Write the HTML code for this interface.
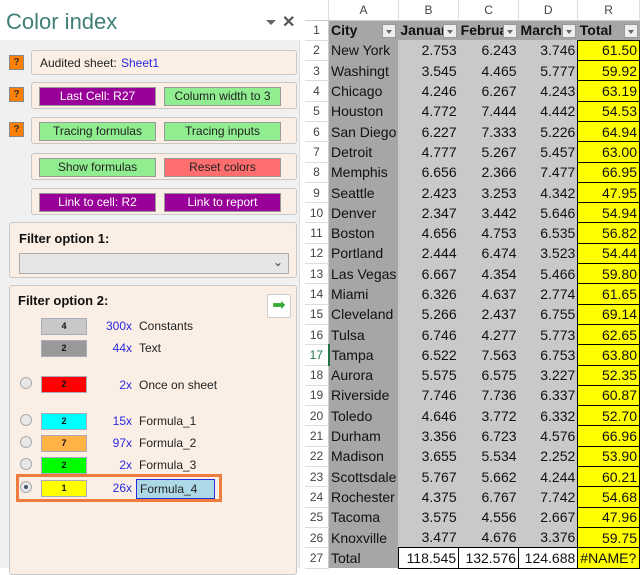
<!DOCTYPE html>
<html><head><style>
*{margin:0;padding:0;box-sizing:border-box}
body{width:640px;height:568px;overflow:hidden;background:#fff;font-family:"Liberation Sans",sans-serif;position:relative}
#left{position:absolute;left:0;top:0;width:300px;height:568px;background:#f0f0f0;border-right:1px solid #ddd}
#title{position:absolute;left:0;top:0;width:300px;height:40px;background:#fff}
#title span{position:absolute;left:6px;top:9px;font-size:22px;color:#3f7f77}
.tri{position:absolute;left:266px;top:20px;width:0;height:0;border-left:5px solid transparent;border-right:5px solid transparent;border-top:5px solid #666}
.x{position:absolute;left:282px;top:12px;font-size:16px;color:#555;font-weight:bold}
.grp{position:absolute;left:31px;width:266px;background:#fbeee4;border:1px solid #c8c8c8;border-radius:3px}
.q{position:absolute;left:9px;width:15px;height:15px;background:#ff8000;border:1px solid #888;font-size:10px;font-weight:bold;text-align:center;line-height:13px;color:#333}
.btn{position:absolute;height:19px;width:117px;font-size:12px;text-align:center;line-height:17px;border:1px solid #999;color:#222}
.p{background:#990099;color:#fff}
.g{background:#90ee90}
.r{background:#ff6e6e}
.lab{position:absolute;font-size:13px;font-weight:bold;color:#111}
.sw{position:absolute;left:41px;width:46px;height:17px;border:1px solid #aab;font-size:9px;font-weight:bold;text-align:center;line-height:15px;color:#111}
.cnt{position:absolute;left:80px;width:52px;text-align:right;font-size:12px;color:#2a2ae0}
.nm{position:absolute;left:139px;font-size:12px;color:#222}
.rad{position:absolute;left:20px;width:12px;height:12px;border-radius:50%;border:1px solid #aaa;background:#e8e8e8}
#sheet{position:absolute;left:305px;top:0;border-collapse:collapse;table-layout:fixed;font-size:14px}
#sheet td{height:20.3px;padding:0 2px;white-space:nowrap;overflow:hidden;line-height:18px}
#sheet tr.h td{height:20px;background:#fff;color:#444;text-align:center;font-size:12px;border-right:1px solid #ddd;border-bottom:1px solid #ccc}
#sheet td.n{background:#fff;color:#444;text-align:center;font-size:12px;border-bottom:1px solid #ddd;border-right:1px solid #ccc}
#sheet td.a{background:#a6a6a6;color:#111}
#sheet td.v{background:#c9c9c9;text-align:right;color:#111}
#sheet td.t{background:#ffff00;text-align:right;border:1px solid #000;color:#111}
#sheet tr.f td.a,#sheet tr.f td.v,#sheet tr.f td.t{background:#a6a6a6;font-weight:bold;text-align:left;position:relative}
#sheet tr.f td.t{background:#a6a6a6;border:none}
#sheet tr.z td.v{background:#fff;border:1px solid #000}
.dd{position:absolute;right:2px;top:3px;width:14px;height:14px;background:#eee;border:1px solid #999}
.dd:after{content:"";position:absolute;left:3px;top:5px;border-left:3px solid transparent;border-right:3px solid transparent;border-top:4px solid #666}
</style></head><body>
<div id="left">
<div id="title"><span>Color index</span><div class="tri"></div><div class="x">✕</div></div>
<div class="q" style="top:55px">?</div>
<div class="grp" style="top:50px;height:25px"><span style="position:absolute;left:8px;top:5px;font-size:12px;color:#222">Audited sheet:</span><span style="position:absolute;left:89px;top:5px;font-size:12px;color:#2a2ae0">Sheet1</span></div>
<div class="q" style="top:87px">?</div>
<div class="grp" style="top:82px;height:27px"><div class="btn p" style="left:7px;top:4px">Last Cell: R27</div><div class="btn g" style="left:132px;top:4px">Column width to 3</div></div>
<div class="q" style="top:122px">?</div>
<div class="grp" style="top:117px;height:27px"><div class="btn g" style="left:7px;top:4px">Tracing formulas</div><div class="btn g" style="left:132px;top:4px">Tracing inputs</div></div>
<div class="grp" style="top:153px;height:27px"><div class="btn g" style="left:7px;top:4px">Show formulas</div><div class="btn r" style="left:132px;top:4px">Reset colors</div></div>
<div class="grp" style="top:188px;height:27px"><div class="btn p" style="left:7px;top:4px">Link to cell: R2</div><div class="btn p" style="left:132px;top:4px">Link to report</div></div>
<div class="grp" style="left:9px;width:288px;top:222px;height:56px"><div class="lab" style="left:9px;top:8px">Filter option 1:</div>
<div style="position:absolute;left:9px;top:30px;width:270px;height:21px;background:#e6e6e6;border:1px solid #aaa"><span style="position:absolute;right:5px;top:1px;font-size:12px;color:#444">⌄</span></div></div>
<div class="grp" style="left:9px;width:288px;top:285px;height:290px">
<div class="lab" style="left:8px;top:7px">Filter option 2:</div>
<div style="position:absolute;left:257px;top:8px;width:24px;height:24px;background:#fff;border:1px solid #ccc;border-radius:2px;color:#3a3;font-size:16px;text-align:center;line-height:22px">➡</div>
</div>
<div class="sw" style="top:318px;background:#c8c8c8">4</div><div class="cnt" style="top:319px">300x</div><div class="nm" style="top:319px">Constants</div>
<div class="sw" style="top:340px;background:#999">2</div><div class="cnt" style="top:341px">44x</div><div class="nm" style="top:341px">Text</div>
<div class="rad" style="top:377px"></div><div class="sw" style="top:376px;background:#f00">2</div><div class="cnt" style="top:378px">2x</div><div class="nm" style="top:378px">Once on sheet</div>
<div class="rad" style="top:414px"></div><div class="sw" style="top:413px;background:#0ff">2</div><div class="cnt" style="top:414px">15x</div><div class="nm" style="top:414px">Formula_1</div>
<div class="rad" style="top:436px"></div><div class="sw" style="top:435px;background:#ffb347">7</div><div class="cnt" style="top:436px">97x</div><div class="nm" style="top:436px">Formula_2</div>
<div class="rad" style="top:458px"></div><div class="sw" style="top:457px;background:#0f0">2</div><div class="cnt" style="top:458px">2x</div><div class="nm" style="top:458px">Formula_3</div>
<div style="position:absolute;left:16px;top:474px;width:206px;height:28px;border:3px solid #f07b3f"></div>
<div class="rad" style="top:481px;background:#e8e8e8"><div style="position:absolute;left:3px;top:3px;width:4px;height:4px;border-radius:50%;background:#456"></div></div>
<div class="sw" style="top:480px;background:#ff0">1</div><div class="cnt" style="top:481px">26x</div>
<div style="position:absolute;left:136px;top:479px;width:79px;height:20px;background:#add8e6;border:1px solid #2a2ae0;font-size:12px;padding:2px 3px;color:#222">Formula_4</div>
</div>
<table id="sheet">
<colgroup><col style="width:26px"><col style="width:61px"><col style="width:63px"><col style="width:62px"><col style="width:61px"><col style="width:62px"></colgroup>
<tr class="h"><td style="background:#fff"></td><td>A</td><td>B</td><td>C</td><td>D</td><td>R</td></tr>
<tr class="f"><td class="n">1</td><td class="a">City<span class="dd"></span></td><td class="v">Januar<span class="dd"></span></td><td class="v">Februa<span class="dd"></span></td><td class="v">March<span class="dd"></span></td><td class="t">Total<span class="dd"></span></td></tr>
<tr><td class="n">2</td><td class="a">New York</td><td class="v">2.753</td><td class="v">6.243</td><td class="v">3.746</td><td class="t">61.50</td></tr>
<tr><td class="n">3</td><td class="a">Washingt</td><td class="v">3.545</td><td class="v">4.465</td><td class="v">5.777</td><td class="t">59.92</td></tr>
<tr><td class="n">4</td><td class="a">Chicago</td><td class="v">4.246</td><td class="v">6.267</td><td class="v">4.243</td><td class="t">63.19</td></tr>
<tr><td class="n">5</td><td class="a">Houston</td><td class="v">4.772</td><td class="v">7.444</td><td class="v">4.442</td><td class="t">54.53</td></tr>
<tr><td class="n">6</td><td class="a">San Diego</td><td class="v">6.227</td><td class="v">7.333</td><td class="v">5.226</td><td class="t">64.94</td></tr>
<tr><td class="n">7</td><td class="a">Detroit</td><td class="v">4.777</td><td class="v">5.267</td><td class="v">5.457</td><td class="t">63.00</td></tr>
<tr><td class="n">8</td><td class="a">Memphis</td><td class="v">6.656</td><td class="v">2.366</td><td class="v">7.477</td><td class="t">66.95</td></tr>
<tr><td class="n">9</td><td class="a">Seattle</td><td class="v">2.423</td><td class="v">3.253</td><td class="v">4.342</td><td class="t">47.95</td></tr>
<tr><td class="n">10</td><td class="a">Denver</td><td class="v">2.347</td><td class="v">3.442</td><td class="v">5.646</td><td class="t">54.94</td></tr>
<tr><td class="n">11</td><td class="a">Boston</td><td class="v">4.656</td><td class="v">4.753</td><td class="v">6.535</td><td class="t">56.82</td></tr>
<tr><td class="n">12</td><td class="a">Portland</td><td class="v">2.444</td><td class="v">6.474</td><td class="v">3.523</td><td class="t">54.44</td></tr>
<tr><td class="n">13</td><td class="a">Las Vegas</td><td class="v">6.667</td><td class="v">4.354</td><td class="v">5.466</td><td class="t">59.80</td></tr>
<tr><td class="n">14</td><td class="a">Miami</td><td class="v">6.326</td><td class="v">4.637</td><td class="v">2.774</td><td class="t">61.65</td></tr>
<tr><td class="n">15</td><td class="a">Cleveland</td><td class="v">5.266</td><td class="v">2.437</td><td class="v">6.755</td><td class="t">69.14</td></tr>
<tr><td class="n">16</td><td class="a">Tulsa</td><td class="v">6.746</td><td class="v">4.277</td><td class="v">5.773</td><td class="t">62.65</td></tr>
<tr><td class="n" style="color:#217346;border-right:2px solid #217346">17</td><td class="a">Tampa</td><td class="v">6.522</td><td class="v">7.563</td><td class="v">6.753</td><td class="t">63.80</td></tr>
<tr><td class="n">18</td><td class="a">Aurora</td><td class="v">5.575</td><td class="v">6.575</td><td class="v">3.227</td><td class="t">52.35</td></tr>
<tr><td class="n">19</td><td class="a">Riverside</td><td class="v">7.746</td><td class="v">7.736</td><td class="v">6.337</td><td class="t">60.87</td></tr>
<tr><td class="n">20</td><td class="a">Toledo</td><td class="v">4.646</td><td class="v">3.772</td><td class="v">6.332</td><td class="t">52.70</td></tr>
<tr><td class="n">21</td><td class="a">Durham</td><td class="v">3.356</td><td class="v">6.723</td><td class="v">4.576</td><td class="t">66.96</td></tr>
<tr><td class="n">22</td><td class="a">Madison</td><td class="v">3.655</td><td class="v">5.534</td><td class="v">2.252</td><td class="t">53.90</td></tr>
<tr><td class="n">23</td><td class="a">Scottsdale</td><td class="v">5.767</td><td class="v">5.662</td><td class="v">4.244</td><td class="t">60.21</td></tr>
<tr><td class="n">24</td><td class="a">Rochester</td><td class="v">4.375</td><td class="v">6.767</td><td class="v">7.742</td><td class="t">54.68</td></tr>
<tr><td class="n">25</td><td class="a">Tacoma</td><td class="v">3.575</td><td class="v">4.556</td><td class="v">2.667</td><td class="t">47.96</td></tr>
<tr><td class="n">26</td><td class="a">Knoxville</td><td class="v">3.477</td><td class="v">4.676</td><td class="v">3.376</td><td class="t">59.75</td></tr>
<tr class="z"><td class="n">27</td><td class="a">Total</td><td class="v">118.545</td><td class="v">132.576</td><td class="v">124.688</td><td class="t" style="text-align:left">#NAME?</td></tr>
</table>
</body></html>
